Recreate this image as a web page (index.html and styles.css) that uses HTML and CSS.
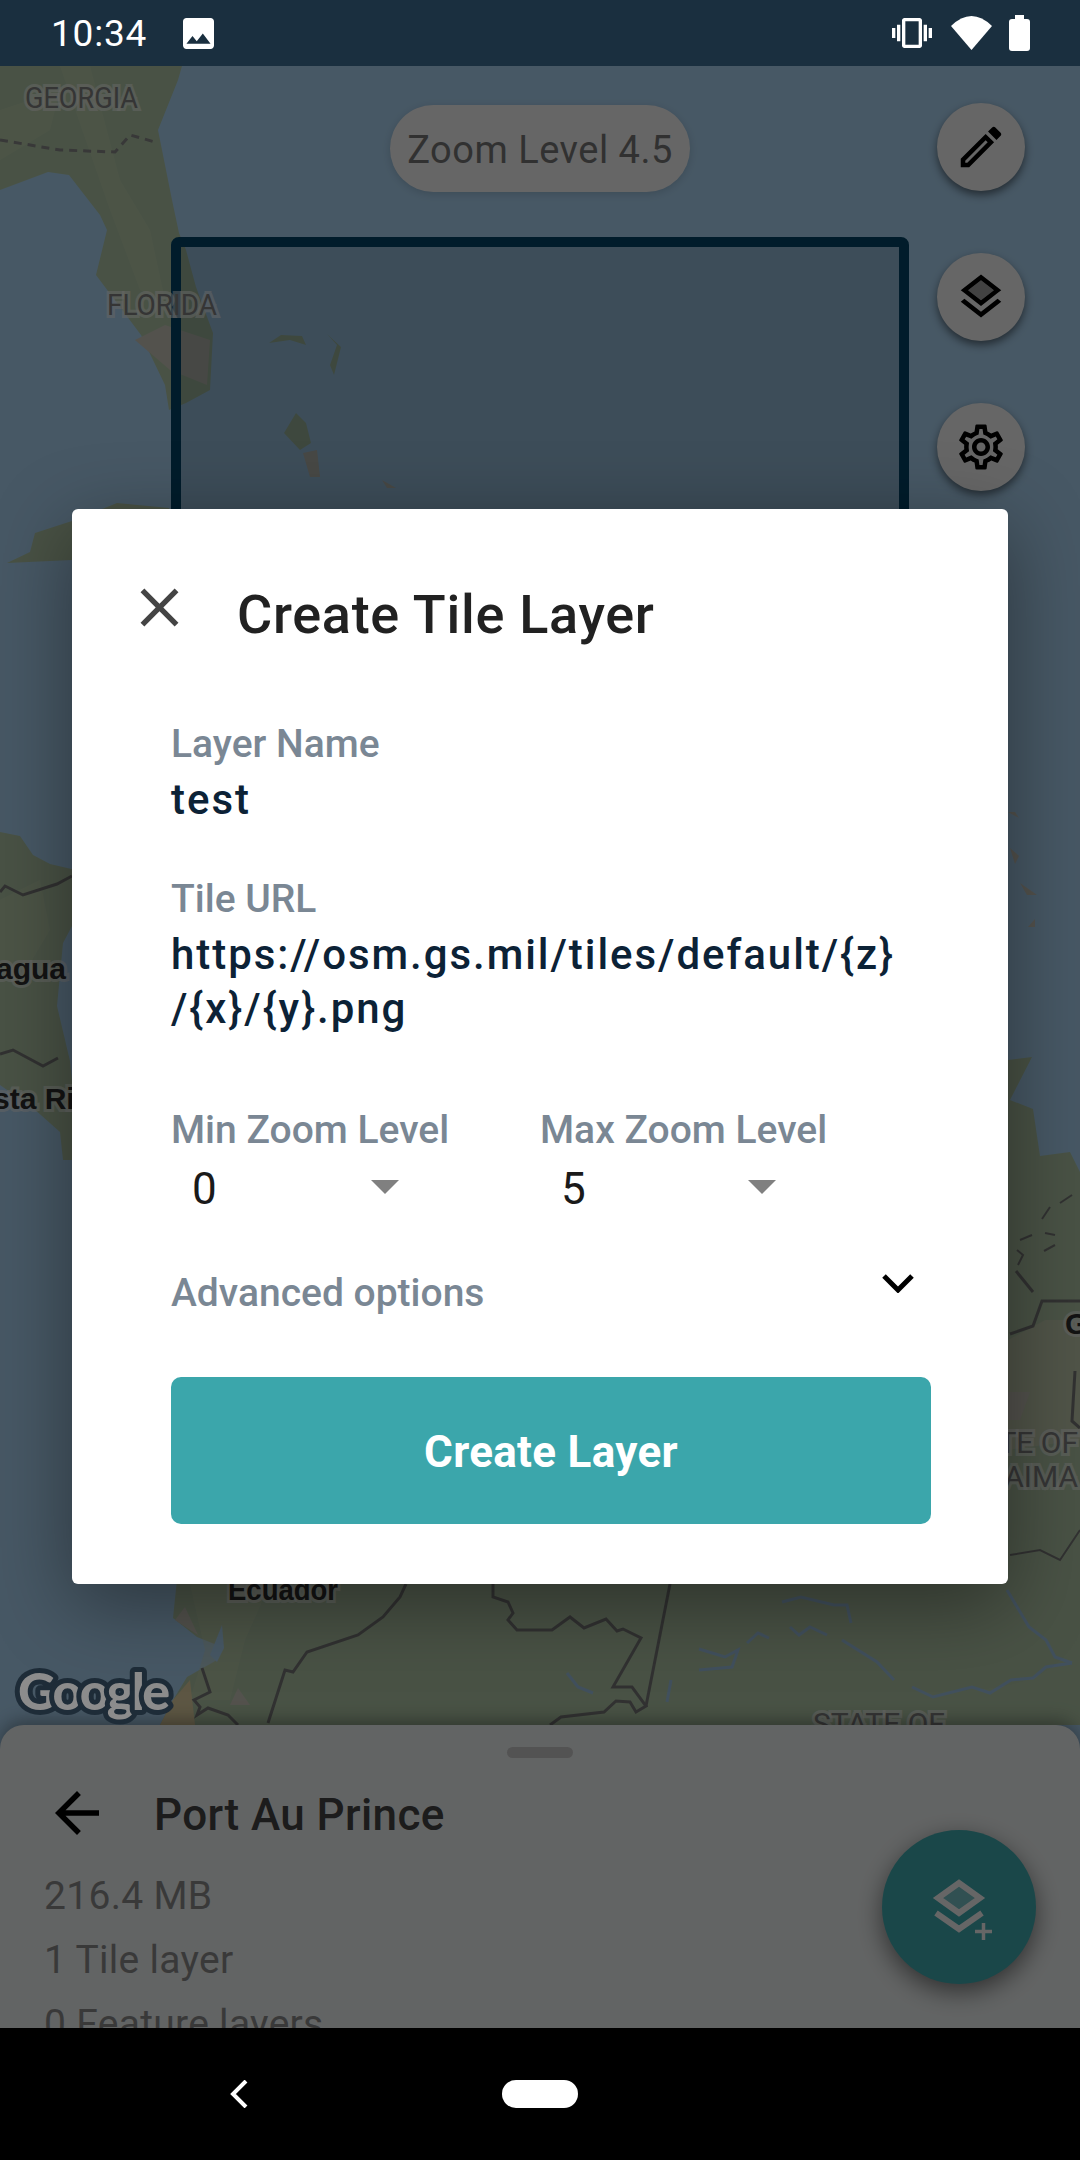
FILE: index.html
```html
<!DOCTYPE html>
<html lang="en">
<head>
    <meta charset="UTF-8">
    <meta name="viewport" content="width=device-width, initial-scale=1.0">
    <title>Create Tile Layer</title>
    <link rel="stylesheet" href="styles.css">
</head>
<body>
    <div class="phone">
        <div class="status-bar">
            <span class="clock">10:34</span>
            <svg class="icon-image" viewBox="3 3 18 18"><path d="M21 19V5c0-1.1-.9-2-2-2H5c-1.1 0-2 .9-2 2v14c0 1.1.9 2 2 2h14c1.1 0 2-.9 2-2zM8.5 13.5l2.5 3.01L14.5 12l4.5 6H5l3.5-4.5z"/></svg>
            <div class="status-right">
                <svg class="icon-vibrate" viewBox="0 0 24 24"><path d="M0 15h2V9H0v6zm3 2h2V7H3v10zm19-8v6h2V9h-2zm-3 8h2V7h-2v10zM16.5 3h-9C6.67 3 6 3.67 6 4.5v15c0 .83.67 1.5 1.5 1.5h9c.83 0 1.5-.67 1.5-1.5v-15c0-.83-.67-1.5-1.5-1.5zM16 19H8V5h8v14z"/></svg>
                <svg class="icon-wifi" viewBox="0 0 41 34"><path d="M0 10Q20.5-10 41 10L20.5 34z"/></svg>
                <div class="battery"><div class="battery-cap"></div><div class="battery-body"></div></div>
            </div>
        </div>

        <div class="screen">
            <svg class="map" viewBox="0 66 1080 1962">
                <rect class="water" x="0" y="66" width="1080" height="1962"/>

                <!-- land -->
                <polygon class="land" points="0,66 182,66 178,80 158,130 172,200 179,233 186,250 196,287 213,333 210,390 186,403 169,410 165,385 141,335 96,275 107,230 100,215 69,175 48,172 0,190"/>
                <polygon class="land-light" points="60,66 90,66 120,180 150,230 165,300 140,290 110,210"/>
                <polygon class="land-light" points="0,110 60,90 50,130 0,160"/>
                <polygon class="land-pale" points="135,340 165,325 210,340 207,385 170,370"/>
                <polygon class="land" points="7,563 30,552 35,533 75,520 117,503 169,508 172,530 72,560"/>
                <polygon class="land" points="269,343 281,335 302,336 306,345 290,340"/>
                <polygon class="land" points="327,334 341,347 334,375 330,365 337,345"/>
                <polygon class="land" points="296,413 284,433 300,450 311,443 306,423"/>
                <polygon class="land-pale" points="303,453 317,450 320,477 310,477"/>
                <polygon class="land-pale" points="382,480 396,488 387,488"/>
                <polygon class="land" points="0,832 20,836 33,855 50,864 80,871 80,911 63,943 57,1006 70,1061 80,1160 63,1160 60,1132 33,1108 0,1085"/>
                <polygon class="land-light" points="0,900 40,880 50,930 20,980 0,960"/>
                <polygon class="land" points="1000,1061 1032,1057 1010,1100 1033,1109 1040,1156 1070,1152 1080,1172 1080,1725 0,1725 160,1725 173,1700 187,1677 217,1660 222,1647 197,1637 173,1618 178,1570 1000,1570"/>
                <polygon class="land-brown" points="1008,1340 1045,1320 1080,1320 1080,1440 1008,1450"/>
                <polygon class="land-pale" points="1008,1392 1030,1392 1020,1420 1008,1420"/>
                <polygon class="land-light" points="190,1584 270,1584 245,1640 230,1700 190,1700 205,1650"/>
                <polygon class="land-pale" points="238,1688 250,1705 230,1705"/>
                <polygon class="land-pale" points="175,1620 185,1607 198,1635"/>
                <polygon class="land-tan" points="160,1725 173,1700 190,1680 195,1725"/>
                <polygon class="land-pale" points="1008,812 1015,812 1019,818"/>
                <polygon class="land-pale" points="1010,848 1019,856 1015,864"/>
                <polygon class="land-pale" points="1020,883 1037,895 1027,895"/>
                <polygon class="land-pale" points="1028,927 1035,919 1035,927"/>

                <!-- rivers -->
                <polyline class="river" points="782,1602 801,1597 834,1605 847,1605 851,1623"/>
                <polyline class="river" points="699,1649 725,1657 738,1650 732,1667 699,1670"/>
                <polyline class="river" points="747,1643 758,1633 769,1638"/>
                <polyline class="river" points="790,1627 799,1635 810,1627 827,1635"/>
                <polyline class="river" points="842,1640 877,1662 894,1680"/>
                <polyline class="river" points="912,1687 933,1697 972,1687 990,1693 1011,1680 1033,1678 1046,1667 1072,1663"/>
                <polyline class="river" points="1007,1590 1029,1627 1046,1640 1055,1657 1072,1663"/>
                <polyline class="river" points="667,1702 671,1680"/>
                <polyline class="river" points="567,1673 578,1687 593,1693"/>
                <polygon class="water" points="210,1655 222,1625 224,1648 217,1662"/>

                <!-- borders -->
                <polyline class="border-dash" points="0,140 60,150 115,152 130,135 155,142"/>
                <polyline class="border" points="0,892 5,886 23,895 57,884 72,876"/>
                <polyline class="border" points="0,1054 13,1050 43,1066 58,1058"/>
                <polyline class="border" points="493,1584 493,1597 508,1602 513,1613 508,1620 517,1630 552,1630 570,1617 584,1628 606,1619 617,1631 623,1629 641,1638 613,1687 632,1687 646,1706 636,1712 630,1702 616,1701 604,1712 561,1717 550,1725"/>
                <polyline class="border" points="670,1584 646,1706"/>
                <polyline class="border" points="406,1584 400,1597 383,1617 358,1635 307,1652 293,1672 285,1670 268,1723"/>
                <polyline class="border" points="202,1668 210,1692 194,1700 200,1707 197,1715 208,1708 228,1715 238,1725"/>
                <polyline class="border" points="1010,1334 1033,1326 1042,1301 1080,1301"/>
                <polyline class="border" points="1075,1371 1072,1421 1080,1428"/>
                <polyline class="border" points="1016,1271 1033,1292"/>
                <polyline class="border-thin" points="1042,1219 1050,1207"/>
                <polyline class="border-thin" points="1060,1203 1072,1195"/>
                <polyline class="border-thin" points="1045,1233 1055,1235"/>
                <polyline class="border-thin" points="1044,1251 1055,1245"/>
                <polyline class="border-thin" points="1020,1240 1032,1235"/>
                <polyline class="border-thin" points="1018,1265 1023,1255 1017,1250"/>
                <polyline class="border-thin" points="1010,1555 1040,1550 1060,1560 1080,1530"/>

                <rect class="region" x="176" y="242" width="728" height="900" rx="3"/>

                <!-- labels -->
                <text class="label" x="25" y="108" textLength="113" lengthAdjust="spacingAndGlyphs">GEORGIA</text>
                <text class="label" x="107" y="315" textLength="110" lengthAdjust="spacingAndGlyphs">FLORIDA</text>
                <text class="label" x="1078" y="1453" text-anchor="end">STATE OF</text>
                <text class="label" x="1078" y="1487" text-anchor="end">RORAIMA</text>
                <text class="label" x="813" y="1734">STATE OF</text>
                <text class="label-bold" x="66" y="979" text-anchor="end">Nicaragua</text>
                <text class="label-bold" x="-47" y="1109">Costa Rica</text>
                <text class="label-bold" x="1065" y="1334">Guyana</text>
                <text class="label-bold" x="228" y="1600" textLength="110" lengthAdjust="spacingAndGlyphs">Ecuador</text>
            </svg>

            <div class="zoom-pill">Zoom Level 4.5</div>

            <div class="map-tools">
                <div class="tool-button">
                    <svg class="tool-icon" viewBox="0 0 24 24"><path d="M14.06 9.02l.92.92L5.92 19H5v-.92l9.06-9.06M17.66 3c-.25 0-.51.1-.7.29l-1.83 1.83 3.75 3.75 1.83-1.83c.39-.39.39-1.02 0-1.41l-2.34-2.34c-.2-.2-.45-.29-.71-.29zm-3.6 3.19L3 17.25V21h3.75L17.81 9.94l-3.75-3.75z"/></svg>
                </div>
                <div class="tool-button">
                    <svg class="tool-icon" viewBox="0 0 24 24"><polygon class="layer-fill" points="12,4.53 17.74,9 12,13.47 6.26,9"/><path d="M11.99 18.54l-7.37-5.73L3 14.07l9 7 9-7-1.63-1.27zM12 16l7.36-5.73L21 9l-9-7-9 7 1.63 1.27L12 16zm0-11.47L17.74 9 12 13.47 6.26 9 12 4.53z"/></svg>
                </div>
                <div class="tool-button">
                    <svg class="tool-icon" viewBox="0 0 24 24"><path d="M19.43 12.98c.04-.32.07-.64.07-.98 0-.34-.03-.66-.07-.98l2.11-1.65c.19-.15.24-.42.12-.64l-2-3.46c-.09-.16-.26-.25-.44-.25-.06 0-.12.01-.17.03l-2.49 1c-.52-.4-1.08-.73-1.69-.98l-.38-2.65C14.46 2.18 14.25 2 14 2h-4c-.25 0-.46.18-.49.42l-.38 2.65c-.61.25-1.17.59-1.69.98l-2.49-1c-.06-.02-.12-.03-.18-.03-.17 0-.34.09-.43.25l-2 3.46c-.13.22-.07.49.12.64l2.11 1.65c-.04.32-.07.65-.07.98 0 .33.03.66.07.98l-2.11 1.65c-.19.15-.24.42-.12.64l2 3.46c.09.16.26.25.44.25.06 0 .12-.01.17-.03l2.49-1c.52.4 1.08.73 1.69.98l.38 2.65c.03.24.24.42.49.42h4c.25 0 .46-.18.49-.42l.38-2.65c.61-.25 1.17-.59 1.69-.98l2.49 1c.06.02.12.03.18.03.17 0 .34-.09.43-.25l2-3.46c.12-.22.07-.49-.12-.64l-2.11-1.65zm-1.98-1.71c.04.31.05.52.05.73 0 .21-.02.43-.05.73l-.14 1.13.89.7 1.08.84-.7 1.21-1.27-.51-1.04-.42-.9.68c-.43.32-.84.56-1.25.73l-1.06.43-.16 1.13-.2 1.35h-1.4l-.19-1.35-.16-1.13-1.06-.43c-.43-.18-.83-.41-1.23-.71l-.91-.7-1.06.43-1.27.51-.7-1.21 1.08-.84.89-.7-.14-1.13c-.03-.31-.05-.54-.05-.74s.02-.43.05-.73l.14-1.13-.89-.7-1.08-.84.7-1.21 1.27.51 1.04.42.9-.68c.43-.32.84-.56 1.25-.73l1.06-.43.16-1.13.2-1.35h1.39l.19 1.35.16 1.13 1.06.43c.43.18.83.41 1.23.71l.91.7 1.06-.43 1.27-.51.7 1.21-1.07.85-.89.7.14 1.13zM12 8c-2.21 0-4 1.79-4 4s1.79 4 4 4 4-1.79 4-4-1.79-4-4-4zm0 6c-1.1 0-2-.9-2-2s.9-2 2-2 2 .9 2 2-.9 2-2 2z"/></svg>
                </div>
            </div>

            <div class="sheet">
                <div class="sheet-handle"></div>
                <div class="sheet-header">
                    <svg class="icon-back" viewBox="0 0 24 24"><path d="M20 11H7.83l5.59-5.59L12 4l-8 8 8 8 1.41-1.41L7.83 13H20v-2z"/></svg>
                    <h2 class="sheet-title">Port Au Prince</h2>
                </div>
                <div class="sheet-info">
                    <p>216.4 MB</p>
                    <p>1 Tile layer</p>
                    <p>0 Feature layers</p>
                </div>
            </div>

            <div class="fab">
                <svg class="fab-icon" viewBox="0 0 66 69">
                    <polygon class="fab-layer" points="29,8 50,23 29,38 8,23"/>
                    <polyline class="fab-line" points="6,38 29,54 52,38"/>
                    <path class="fab-plus" d="M45 56.500h17M53.500 48v17"/>
                </svg>
            </div>

            <div class="scrim"></div>

            <svg class="google-mark" viewBox="0 0 170 70">
                <text x="10" y="45" textLength="152">Google</text>
            </svg>

            <div class="dialog">
                <div class="dialog-header">
                    <svg class="icon-close" viewBox="0 0 24 24"><path d="M19 6.41L17.59 5 12 10.59 6.41 5 5 6.41 10.59 12 5 17.59 6.41 19 12 13.41 17.59 19 19 17.59 13.41 12z"/></svg>
                    <h1 class="dialog-title">Create Tile Layer</h1>
                </div>
                <div class="dialog-body">
                    <div class="field">
                        <div class="field-label">Layer Name</div>
                        <div class="field-value">test</div>
                    </div>
                    <div class="field">
                        <div class="field-label">Tile URL</div>
                        <div class="field-value">https://osm.gs.mil/tiles/default/{z}<br>/{x}/{y}.png</div>
                    </div>
                    <div class="zoom-row">
                        <div class="zoom-min">
                            <div class="field-label">Min Zoom Level</div>
                            <div class="spinner"><span>0</span><span class="spinner-arrow"></span></div>
                        </div>
                        <div class="zoom-max">
                            <div class="field-label">Max Zoom Level</div>
                            <div class="spinner"><span>5</span><span class="spinner-arrow"></span></div>
                        </div>
                    </div>
                    <div class="advanced-row">
                        <div class="field-label">Advanced options</div>
                        <svg class="icon-expand" viewBox="0 0 32 20"><polyline points="2,3 16,17 30,3"/></svg>
                    </div>
                    <button class="create-button">Create Layer</button>
                </div>
            </div>
        </div>

        <div class="nav-bar">
            <svg class="nav-back" viewBox="0 0 18 28"><polyline points="16,1 3,14 16,27"/></svg>
            <div class="nav-home"></div>
        </div>
    </div>
</body>
</html>
```

FILE: styles.css
```css
* {
    box-sizing: border-box;
}
body {
    margin: 0;
    font-family: Roboto, "Noto Sans", sans-serif;
}
h1, h2, p {
    margin: 0;
}
.phone {
    display: flex;
    flex-direction: column;
    width: 1080px;
    height: 2160px;
    overflow: hidden;
}

/* status bar */
.status-bar {
    display: flex;
    align-items: center;
    flex: none;
    height: 66px;
    padding: 0 50px 0 51px;
    background: #1a2f3f;
    color: #fff;
}
.status-bar svg {
    fill: #fff;
}
.clock {
    font-size: 37px;
    letter-spacing: 0.8px;
}
.icon-image {
    width: 31px;
    height: 31px;
    margin-left: 36px;
}
.status-right {
    display: flex;
    align-items: center;
    margin-left: auto;
}
.icon-vibrate {
    width: 40px;
    height: 40px;
}
.icon-wifi {
    width: 41px;
    height: 34px;
    margin-left: 19px;
}
.battery {
    display: flex;
    flex-direction: column;
    align-items: center;
    width: 21px;
    margin-left: 17px;
}
.battery-cap {
    width: 9px;
    height: 4px;
    background: #fff;
}
.battery-body {
    width: 21px;
    height: 32px;
    border-radius: 3px;
    background: #fff;
}

/* map */
.screen {
    position: relative;
    flex: 1;
    overflow: hidden;
}
.map {
    position: absolute;
    left: 0;
    top: 0;
    width: 1080px;
    height: 1962px;
}
.water { fill: #b2dcfc; }
.land { fill: #b6cead; }
.land-light { fill: #d2dab8; opacity: 0.35; }
.land-pale { fill: #d0ccc0; }
.land-brown { fill: #dcd4bc; opacity: 0.45; }
.land-tan { fill: #e8d8a8; }
.river {
    fill: none;
    stroke: #a4c8e8;
    stroke-width: 3;
}
.border {
    fill: none;
    stroke: #7c7c7c;
    stroke-width: 3;
}
.border-thin {
    fill: none;
    stroke: #7c7c7c;
    stroke-width: 2;
}
.border-dash {
    fill: none;
    stroke: #8c8c8c;
    stroke-width: 3;
    stroke-dasharray: 8 6;
}
.label {
    font-size: 30px;
    fill: #848484;
    stroke: rgba(255, 255, 255, 0.55);
    stroke-width: 6px;
    paint-order: stroke;
}
.label-bold {
    font-family: "Liberation Sans", sans-serif;
    font-size: 30px;
    font-weight: 700;
    fill: #303030;
    stroke: rgba(255, 255, 255, 0.55);
    stroke-width: 6px;
    paint-order: stroke;
}
.region {
    fill: rgba(0, 30, 50, 0.14);
    stroke: #03486c;
    stroke-width: 10;
}
.zoom-pill {
    position: absolute;
    left: 390px;
    top: 39px;
    width: 300px;
    height: 87px;
    padding-top: 3px;
    border-radius: 44px;
    background: #fff;
    color: #7c7c7c;
    font-size: 38px;
    line-height: 84px;
    letter-spacing: 0.5px;
    text-align: center;
    box-shadow: 0 2px 8px rgba(0, 0, 0, 0.15);
}
.map-tools {
    position: absolute;
    left: 937px;
    top: 37px;
    display: flex;
    flex-direction: column;
    gap: 62px;
}
.tool-button {
    display: flex;
    align-items: center;
    justify-content: center;
    width: 88px;
    height: 88px;
    border-radius: 50%;
    background: #fff;
    box-shadow: 0 4px 8px rgba(0, 0, 0, 0.5);
}
.tool-icon {
    width: 54px;
    height: 54px;
}
.layer-fill {
    fill: #000;
    opacity: 0.35;
}
.google-mark {
    position: absolute;
    left: 8px;
    top: 1599px;
    width: 170px;
    height: 70px;
    overflow: visible;
}
.google-mark text {
    font-family: Lato, sans-serif;
    font-size: 52px;
    font-weight: 900;
    fill: #8c8c8c;
    stroke: #1e2c38;
    stroke-width: 10px;
    stroke-linejoin: round;
    paint-order: stroke;
}

/* bottom sheet */
.sheet {
    position: absolute;
    left: 0;
    right: 0;
    bottom: 0;
    height: 303px;
    padding-top: 22px;
    border-radius: 24px 24px 0 0;
    background: #f6fafa;
    box-shadow: 0 -4px 18px rgba(0, 0, 0, 0.35);
    overflow: hidden;
}
.sheet-handle {
    width: 66px;
    height: 11px;
    margin: 0 auto;
    border-radius: 6px;
    background: #d0d0d0;
}
.sheet-header {
    display: flex;
    align-items: center;
    margin-top: 22px;
    padding-left: 44px;
}
.icon-back {
    width: 66px;
    height: 66px;
}
.sheet-title {
    margin-left: 44px;
    padding-top: 4px;
    font-size: 44px;
    font-weight: 500;
    letter-spacing: 0.4px;
    color: #464646;
}
.sheet-info {
    margin-top: 18px;
    padding-left: 44px;
    font-size: 39px;
    line-height: 64px;
    letter-spacing: 0.3px;
    color: #909090;
}
.fab {
    position: absolute;
    left: 882px;
    top: 1764px;
    display: flex;
    align-items: center;
    justify-content: center;
    width: 154px;
    height: 154px;
    border-radius: 50%;
    background: #41b1b7;
    box-shadow: 0 8px 24px rgba(0, 0, 0, 0.5);
}
.fab-icon {
    width: 66px;
    height: 69px;
    margin: 5px 0 0 8px;
    overflow: visible;
}
.fab-layer {
    fill: rgba(255, 255, 255, 0.3);
    stroke: #fff;
    stroke-width: 6;
}
.fab-line {
    fill: none;
    stroke: #fff;
    stroke-width: 6;
}
.fab-plus {
    fill: none;
    stroke: #fff;
    stroke-width: 3.500;
}
.scrim {
    position: absolute;
    left: 0;
    top: 0;
    right: 0;
    bottom: 0;
    background: rgba(0, 0, 0, 0.6);
}

/* dialog */
.dialog {
    position: absolute;
    left: 72px;
    top: 443px;
    width: 936px;
    padding-top: 74px;
    padding-bottom: 60px;
    border-radius: 6px;
    background: #fff;
    box-shadow: 0 20px 80px rgba(0, 0, 0, 0.4);
}
.dialog-header {
    display: flex;
    align-items: flex-start;
    height: 64px;
    padding-left: 55px;
}
.icon-close {
    flex: none;
    width: 65px;
    height: 65px;
    margin-top: -8px;
    fill: #444;
}
.dialog-title {
    margin-left: 45px;
    font-size: 54px;
    font-weight: 500;
    line-height: 64px;
    letter-spacing: 0.7px;
    color: #212121;
}
.dialog-body {
    margin-top: 74px;
    padding-left: 99px;
    padding-right: 77px;
}
.field {
    margin-bottom: 49px;
}
.field-label {
    font-size: 39px;
    font-weight: 500;
    line-height: 46px;
    color: #7a8794;
}
.field-value {
    margin-top: 6px;
    font-size: 42px;
    font-weight: 500;
    line-height: 54px;
    white-space: nowrap;
    color: #0c2236;
    letter-spacing: 1.950px;
}
.zoom-row {
    display: flex;
    margin-top: 71px;
}
.zoom-min {
    width: 369px;
}
.zoom-min .spinner {
    width: 228px;
}
.zoom-max .spinner {
    width: 236px;
}
.spinner {
    display: flex;
    align-items: center;
    justify-content: space-between;
    height: 54px;
    margin-top: 9px;
    padding-left: 21px;
    font-size: 44px;
    color: #1a1a1a;
}
.spinner-arrow {
    width: 0;
    height: 0;
    border-left: 14.500px solid transparent;
    border-right: 14.500px solid transparent;
    border-top: 14px solid #808080;
    margin-top: -4px;
}
.advanced-row {
    display: flex;
    align-items: flex-start;
    justify-content: space-between;
    margin-top: 54px;
}
.icon-expand {
    width: 32px;
    height: 20px;
    margin: 3px 17px 0 0;
    fill: none;
    stroke: #000;
    stroke-width: 5;
}
.create-button {
    display: block;
    width: 760px;
    height: 147px;
    margin-top: 61px;
    padding-top: 3px;
    border: none;
    border-radius: 10px;
    background: #3ba6ab;
    color: #fff;
    font-family: Roboto, sans-serif;
    font-size: 44px;
    font-weight: 700;
    letter-spacing: 0.3px;
}

/* navigation bar */
.nav-bar {
    display: flex;
    align-items: center;
    flex: none;
    height: 132px;
    padding-left: 230px;
    background: #000;
}
.nav-back {
    width: 18px;
    height: 28px;
    fill: none;
    stroke: #fff;
    stroke-width: 4;
}
.nav-home {
    width: 76px;
    height: 28px;
    margin-left: 254px;
    border-radius: 14px;
    background: #fff;
}
```
